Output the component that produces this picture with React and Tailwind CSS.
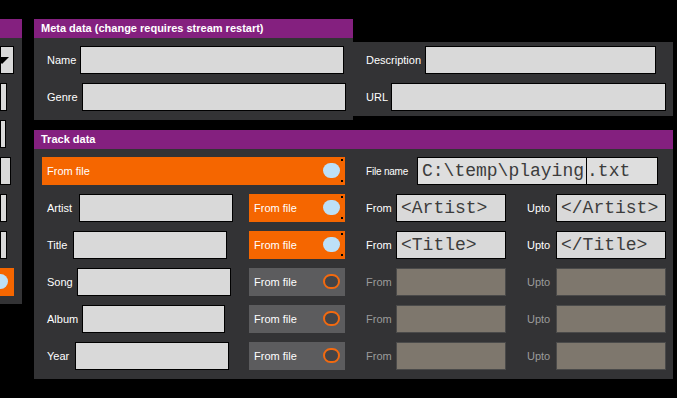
import React from 'react';

const font = { fontFamily: '"Liberation Sans", Arial, sans-serif' };
const mono = { fontFamily: '"Liberation Mono", monospace' };

// input box used by the meta and track forms
const Field = ({ w, children, disabled, className = '' }) => (
  <div
    className={`h-[28px] border ${disabled ? 'bg-[#7e776d] border-[#4a4a4a]' : 'bg-[#d9d9d9] border-black'} ${w} ${className}`}
  >
    {children}
  </div>
);

const MonoText = ({ children }) => (
  <span className="pl-[4px] text-[18px] leading-[26px] text-[#3c3c3c]" style={mono}>
    {children}
  </span>
);

const Toggle = ({ on, wide }) => (
  <div
    className={`relative flex h-[28px] items-center pl-[5px] text-[11px] text-white ${wide ? 'w-[303px]' : 'w-[96px]'} ${on ? 'bg-[#f56600]' : 'bg-[#5c5c5e]'}`}
  >
    From file
    {on ? (
      <>
        <span className="absolute right-[5px] top-[6px] h-[15px] w-[17px] rounded-full bg-[#bde0f7]" />
        <span className="absolute right-[2px] top-[2px] h-[2px] w-[2px] bg-black" />
        <span className="absolute right-[2px] bottom-[3px] h-[2px] w-[2px] bg-black" />
      </>
    ) : (
      <span className="absolute right-[5px] top-[6px] h-[15px] w-[17px] rounded-full border-2 border-[#f26a10] bg-[#444446]" />
    )}
  </div>
);

const trackRows = [
  { label: 'Artist', lw: 'w-[37px]', iw: 'w-[154px]', on: true, from: '<Artist>', upto: '</Artist>' },
  { label: 'Title', lw: 'w-[31px]', iw: 'w-[154px]', on: true, from: '<Title>', upto: '</Title>' },
  { label: 'Song', lw: 'w-[35px]', iw: 'w-[154px]', on: false },
  { label: 'Album', lw: 'w-[40px]', iw: 'w-[143px]', on: false },
  { label: 'Year', lw: 'w-[33px]', iw: 'w-[154px]', on: false },
];

export default function App() {
  return (
    <div className="flex h-[398px] w-[677px] overflow-hidden bg-black" style={font}>
      {/* clipped panel on the left edge */}
      <div className="mt-[19px] flex w-[22px] flex-col">
        <div className="h-[19px] bg-[#84207f]" />
        <div className="flex h-[266px] flex-col gap-[9px] bg-[#333335] pt-[8px]">
          <div className="relative h-[28px] w-[14px] overflow-hidden border border-black bg-[#d9d9d9]">
            <span className="absolute -left-[6px] top-[10px] h-0 w-0 border-l-[7px] border-r-[7px] border-t-[7px] border-l-transparent border-r-transparent border-t-black" />
          </div>
          <div className="h-[28px] w-[7px] border border-black bg-[#d9d9d9]" />
          <div className="h-[28px] w-[6px] border border-black bg-[#d9d9d9]" />
          <div className="h-[28px] w-[11px] border border-black bg-[#d9d9d9]" />
          <div className="h-[28px] w-[7px] border border-black bg-[#d9d9d9]" />
          <div className="h-[28px] w-[7px] border border-black bg-[#d9d9d9]" />
          <div className="relative h-[28px] w-[14px] overflow-hidden bg-[#f56600]">
            <span className="absolute -left-[9px] top-[6px] h-[15px] w-[17px] rounded-full bg-[#bde0f7]" />
          </div>
        </div>
      </div>

      <div className="ml-[12px] flex w-[639px] flex-col">
        {/* Meta data */}
        <div className="mt-[19px] flex">
          <div className="flex w-[319px] flex-col">
            <div className="flex h-[19px] items-center bg-[#84207f] pl-[7px] text-[11px] font-bold text-white">
              Meta data (change requires stream restart)
            </div>
            <div className="flex flex-col gap-[9px] bg-[#333335] pb-[9px] pl-[13px] pt-[8px] text-[11px] text-white">
              <div className="flex items-center">
                <span className="w-[33px]">Name</span>
                <Field w="w-[264px]" />
              </div>
              <div className="flex items-center">
                <span className="w-[35px]">Genre</span>
                <Field w="w-[264px]" />
              </div>
            </div>
          </div>
          <div className="mt-[23px] flex h-[74px] w-[320px] flex-col gap-[9px] bg-[#333335] pl-[13px] pt-[4px] text-[11px] text-white">
            <div className="flex items-center">
              <span className="w-[59px]">Description</span>
              <Field w="w-[231px]" />
            </div>
            <div className="flex items-center">
              <span className="w-[25px]">URL</span>
              <Field w="w-[275px]" />
            </div>
          </div>
        </div>

        {/* Track data */}
        <div className="mt-[10px] flex h-[19px] items-center bg-[#84207f] pl-[7px] text-[11px] font-bold text-white">
          Track data
        </div>
        <div className="flex flex-col gap-[9px] bg-[#333335] pb-[9px] pl-[8px] pt-[8px] text-[11px] text-white">
          <div className="flex items-center">
            <Toggle on wide />
            <span className="ml-[21px] w-[51px] text-[10px] tracking-[-0.2px]">File name</span>
            <Field w="w-[241px]" className="flex items-center bg-[#dedede]">
              <MonoText>C:\temp\playing</MonoText>
              <span className="ml-[2px] h-full w-px bg-black" />
              <span className="text-[18px] leading-[26px] text-[#3c3c3c]" style={mono}>.txt</span>
            </Field>
          </div>
          {trackRows.map((r) => (
            <div key={r.label} className="flex items-center">
              <div className="flex w-[303px] items-center">
                <span className={`pl-[5px] ${r.lw}`}>{r.label}</span>
                <Field w={r.iw} />
                <div className="ml-auto">
                  <Toggle on={r.on} />
                </div>
              </div>
              <span className={`ml-[21px] w-[30px] ${r.from ? 'text-white' : 'text-[#9b9b9b]'}`}>From</span>
              <Field w="w-[110px]" disabled={!r.from} className="flex items-center">
                {r.from && <MonoText>{r.from}</MonoText>}
              </Field>
              <span className={`ml-[21px] w-[29px] ${r.from ? 'text-white' : 'text-[#9b9b9b]'}`}>Upto</span>
              <Field w="w-[110px]" disabled={!r.from} className="flex items-center">
                {r.upto && <MonoText>{r.upto}</MonoText>}
              </Field>
            </div>
          ))}
        </div>
      </div>
    </div>
  );
}
